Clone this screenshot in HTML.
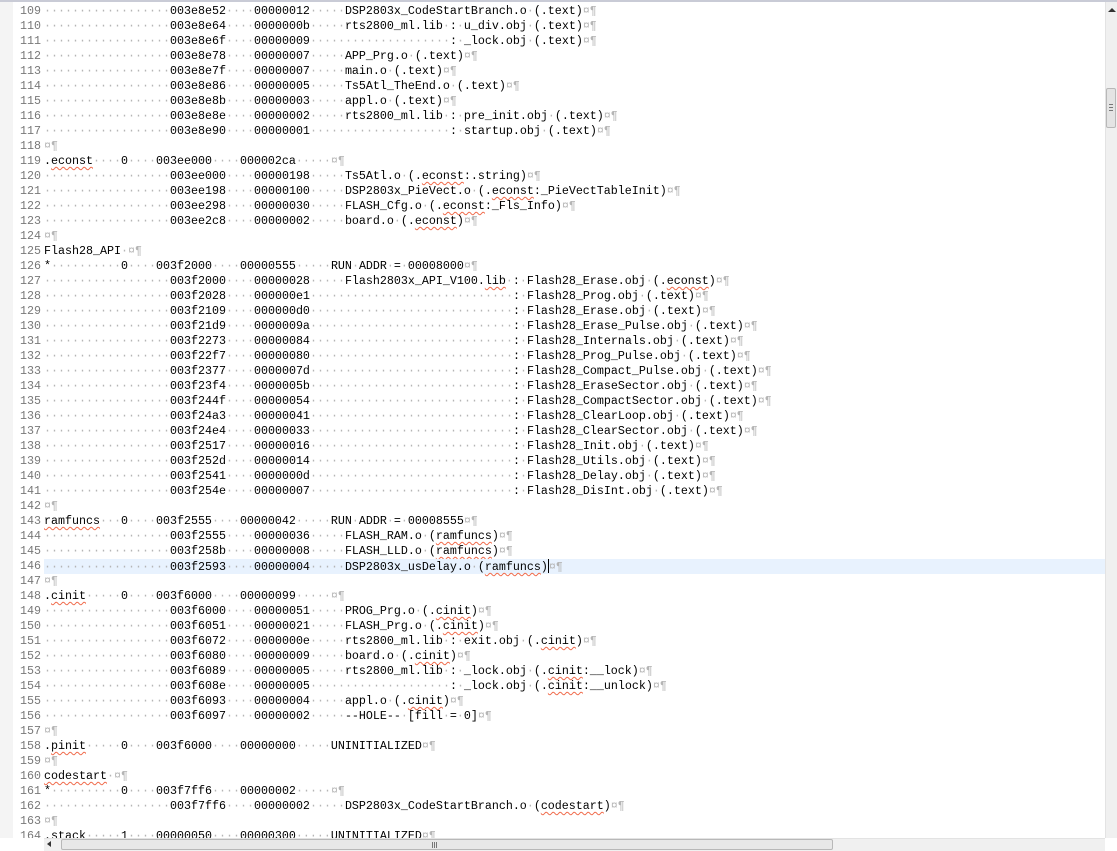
<!DOCTYPE html>
<html><head><meta charset="utf-8">
<style>
html,body{margin:0;padding:0;background:#fff;width:1117px;height:850px;overflow:hidden}
#ed{position:absolute;left:0;top:0;width:1105px;height:838px;overflow:hidden}
.topl{position:absolute;left:0;top:0;width:1117px;height:2px;background:#c9cbd6}
.gut{position:absolute;left:0;top:2px;width:13px;height:836px;background:#f4f4f4}
.ln{position:absolute;left:0;width:1105px;height:15px;font:11.67px/15px "Liberation Mono",monospace;white-space:pre;color:#000}
.ln .n{position:absolute;right:1064px;color:#787878}
.ln .t{position:absolute;left:44px}
.d{color:#b5b5b5}
.w{text-decoration:underline wavy #f06a4a;text-decoration-thickness:1px;text-underline-offset:2px}
.cur{background:#e8f2fe}
.caret{display:inline-block;width:1px;height:14px;background:#000;vertical-align:-3px}
.vs{position:absolute;left:1105px;top:2px;width:12px;height:836px;background:#f0f0f0;border-left:1px solid #e3e3e3}
.vth{position:absolute;left:1106px;top:88px;width:10px;height:40px;background:#e4e4e4;border:1px solid #b8b8b8;border-radius:2px;box-sizing:border-box}
.hs{position:absolute;left:44px;top:838px;width:1061px;height:12px;background:#f0f0f0;border-top:1px solid #e3e3e3}
.hth{position:absolute;left:61px;top:839px;width:772px;height:11px;background:#e8e8e8;border:1px solid #b8b8b8;border-radius:2px;box-sizing:border-box}
</style></head><body>
<div id="ed"><div class="gut"></div></div>
<div class="topl"></div>
<div class="vs"></div>
<div style="position:absolute;left:1108px;top:8px;width:0;height:0;border-left:4px solid transparent;border-right:4px solid transparent;border-bottom:4px solid #333"></div>
<div class="vth"><div style="margin:15px 2px 0;height:1px;background:#777;box-shadow:0 3px 0 #777,0 6px 0 #777"></div></div>
<div class="hs"></div>
<div style="position:absolute;left:47px;top:841px;width:0;height:0;border-top:3px solid transparent;border-bottom:3px solid transparent;border-right:4px solid #333"></div>
<div class="hth"><div style="position:absolute;left:370px;top:2px;width:1px;height:6px;background:#777;box-shadow:2px 0 0 #777,4px 0 0 #777"></div></div>
<script>
var W=["econst","cinit","pinit","codestart","ramfuncs"];
var rows=[
[109,[[18,"003e8e52"],[30,"00000012"],[43,"DSP2803x_CodeStartBranch.o (.text)"]]],
[110,[[18,"003e8e64"],[30,"0000000b"],[43,"rts2800_ml.lib : u_div.obj (.text)"]]],
[111,[[18,"003e8e6f"],[30,"00000009"],[58,": _lock.obj (.text)"]]],
[112,[[18,"003e8e78"],[30,"00000007"],[43,"APP_Prg.o (.text)"]]],
[113,[[18,"003e8e7f"],[30,"00000007"],[43,"main.o (.text)"]]],
[114,[[18,"003e8e86"],[30,"00000005"],[43,"Ts5Atl_TheEnd.o (.text)"]]],
[115,[[18,"003e8e8b"],[30,"00000003"],[43,"appl.o (.text)"]]],
[116,[[18,"003e8e8e"],[30,"00000002"],[43,"rts2800_ml.lib : pre_init.obj (.text)"]]],
[117,[[18,"003e8e90"],[30,"00000001"],[58,": startup.obj (.text)"]]],
[118,[]],
[119,[[0,".econst"],[11,"0"],[16,"003ee000"],[28,"000002ca"],[41,""]]],
[120,[[18,"003ee000"],[30,"00000198"],[43,"Ts5Atl.o (.econst:.string)"]]],
[121,[[18,"003ee198"],[30,"00000100"],[43,"DSP2803x_PieVect.o (.econst:_PieVectTableInit)"]]],
[122,[[18,"003ee298"],[30,"00000030"],[43,"FLASH_Cfg.o (.econst:_Fls_Info)"]]],
[123,[[18,"003ee2c8"],[30,"00000002"],[43,"board.o (.econst)"]]],
[124,[]],
[125,[[0,"Flash28_API "]]],
[126,[[0,"*"],[11,"0"],[16,"003f2000"],[28,"00000555"],[41,"RUN ADDR = 00008000"]]],
[127,[[18,"003f2000"],[30,"00000028"],[43,"Flash2803x_API_V100.lib : Flash28_Erase.obj (.econst)"]]],
[128,"003f2028","000000e1","Prog"],
[129,"003f2109","000000d0","Erase"],
[130,"003f21d9","0000009a","Erase_Pulse"],
[131,"003f2273","00000084","Internals"],
[132,"003f22f7","00000080","Prog_Pulse"],
[133,"003f2377","0000007d","Compact_Pulse"],
[134,"003f23f4","0000005b","EraseSector"],
[135,"003f244f","00000054","CompactSector"],
[136,"003f24a3","00000041","ClearLoop"],
[137,"003f24e4","00000033","ClearSector"],
[138,"003f2517","00000016","Init"],
[139,"003f252d","00000014","Utils"],
[140,"003f2541","0000000d","Delay"],
[141,"003f254e","00000007","DisInt"],
[142,[]],
[143,[[0,"ramfuncs"],[11,"0"],[16,"003f2555"],[28,"00000042"],[41,"RUN ADDR = 00008555"]]],
[144,[[18,"003f2555"],[30,"00000036"],[43,"FLASH_RAM.o (ramfuncs)"]]],
[145,[[18,"003f258b"],[30,"00000008"],[43,"FLASH_LLD.o (ramfuncs)"]]],
[146,[[18,"003f2593"],[30,"00000004"],[43,"DSP2803x_usDelay.o (ramfuncs)"]]],
[147,[]],
[148,[[0,".cinit"],[11,"0"],[16,"003f6000"],[28,"00000099"],[41,""]]],
[149,[[18,"003f6000"],[30,"00000051"],[43,"PROG_Prg.o (.cinit)"]]],
[150,[[18,"003f6051"],[30,"00000021"],[43,"FLASH_Prg.o (.cinit)"]]],
[151,[[18,"003f6072"],[30,"0000000e"],[43,"rts2800_ml.lib : exit.obj (.cinit)"]]],
[152,[[18,"003f6080"],[30,"00000009"],[43,"board.o (.cinit)"]]],
[153,[[18,"003f6089"],[30,"00000005"],[43,"rts2800_ml.lib : _lock.obj (.cinit:__lock)"]]],
[154,[[18,"003f608e"],[30,"00000005"],[58,": _lock.obj (.cinit:__unlock)"]]],
[155,[[18,"003f6093"],[30,"00000004"],[43,"appl.o (.cinit)"]]],
[156,[[18,"003f6097"],[30,"00000002"],[43,"--HOLE-- [fill = 0]"]]],
[157,[]],
[158,[[0,".pinit"],[11,"0"],[16,"003f6000"],[28,"00000000"],[41,"UNINITIALIZED"]]],
[159,[]],
[160,[[0,"codestart "]]],
[161,[[0,"*"],[11,"0"],[16,"003f7ff6"],[28,"00000002"],[41,""]]],
[162,[[18,"003f7ff6"],[30,"00000002"],[43,"DSP2803x_CodeStartBranch.o (codestart)"]]],
[163,[]],
[164,[[0,".stack"],[11,"1"],[16,"00000050"],[28,"00000300"],[41,"UNINITIALIZED"]]]
];
function esc(s){return s.replace(/&/g,"&amp;").replace(/</g,"&lt;")}
function fmt(s,n){
  var out="",parts=s.split(/( )/);
  for(var i=0;i<parts.length;i++){var p=parts[i];
    if(p===" "){out+='<span class="d">·</span>';continue;}
    if(!p)continue;
    var h=esc(p);
    W.forEach(function(w){h=h.replace(new RegExp("(^|[.(:_])("+w+")(?=[):.]|$)"),'$1<span class="w">$2</span>');});
    if(n==127)h=h.replace(/\.lib$/,'.<span class="w">lib</span>');
    out+=h;}
  return out;}
var ed=document.getElementById("ed"),html="";
rows.forEach(function(r){
  var n=r[0],segs;
  if(typeof r[1]==="string"){segs=[[18,r[1]],[30,r[2]],[67,": Flash28_"+r[3]+".obj (.text)"]];}else segs=r[1];
  var s="";
  segs.forEach(function(g){while(s.length<g[0])s+=" ";s+=g[1];});
  var top=4+(n-109)*15;
  var body=fmt(s,n)+(n==146?'<span class="caret"></span>':'')+'<span class="d">¤¶</span>';
  html+='<div class="ln" style="top:'+top+'px"><span class="n">'+n+'</span>'+(n==146?'<div class="cur" style="position:absolute;left:44px;top:0;width:1061px;height:15px"></div>':'')+'<span class="t">'+body+'</span></div>';
});
ed.insertAdjacentHTML("beforeend",html);
</script>
</body></html>
